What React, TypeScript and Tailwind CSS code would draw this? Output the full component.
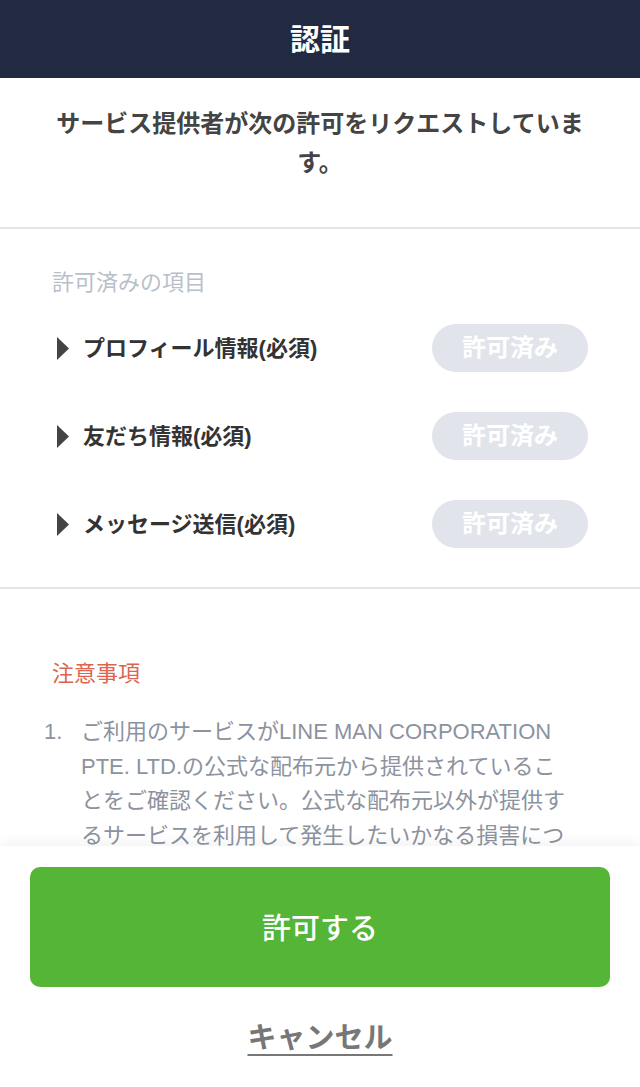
const items = ["プロフィール情報(必須)", "友だち情報(必須)", "メッセージ送信(必須)"];

export default function App() {
  return (
    <div
      className="flex h-[1087px] w-[640px] flex-col overflow-hidden bg-white"
      style={{ fontFamily: '"Liberation Sans", "Noto Sans CJK JP", sans-serif' }}
    >
      <header className="flex h-[78px] shrink-0 items-center justify-center bg-[#222a42]">
        <h1 className="text-[30px] font-bold text-white">認証</h1>
      </header>

      <div className="relative min-h-0 flex-1">
        <section className="border-b-2 border-[#e5e5e5] px-[50px] pt-[26px] pb-[45px]">
          <p className="text-center text-[24px] font-bold leading-[39px] text-[#444]">
            サービス提供者が次の許可をリクエストしています。
          </p>
        </section>

        <section className="border-b-2 border-[#e5e5e5] px-[52px] pt-[39px] pb-[19px]">
          <h2 className="text-[22px] leading-[30px] text-[#b9bfc8]">許可済みの項目</h2>
          <ul className="mt-[6px]">
            {items.map((item) => (
              <li key={item} className="flex h-[88px] items-center justify-between">
                <div className="flex items-center gap-[14px] pl-[5px]">
                  <svg width="12" height="23" viewBox="0 0 12 23">
                    <path d="M0 0 L12 11.5 L0 23 Z" fill="#444" />
                  </svg>
                  <span className="text-[22px] font-bold text-[#333]">{item}</span>
                </div>
                <span className="flex h-[48px] w-[156px] items-center justify-center rounded-full bg-[#e1e5eb] text-[24px] font-bold text-white">
                  許可済み
                </span>
              </li>
            ))}
          </ul>
        </section>

        <section className="px-[52px] pt-[70px]">
          <h2 className="text-[22px] leading-[30px] text-[#dc6550]">注意事項</h2>
          <ol className="mt-[26px] -ml-[8px] text-[22px] leading-[34.5px] text-[#8c929e]">
            <li className="flex gap-[13px]">
              <span className="w-[24px] shrink-0">1.</span>
              <span className="whitespace-nowrap">
                ご利用のサービスがLINE MAN CORPORATION
                <br />
                PTE. LTD.の公式な配布元から提供されているこ
                <br />
                とをご確認ください。公式な配布元以外が提供す
                <br />
                るサービスを利用して発生したいかなる損害につ
              </span>
            </li>
          </ol>
        </section>
      </div>

      <footer className="relative z-10 flex h-[241px] shrink-0 flex-col items-center bg-white px-[30px] pt-[21px] shadow-[0_-6px_10px_rgba(0,0,0,0.04)]">
        <button className="flex h-[120px] w-full items-center justify-center rounded-[10px] bg-[#55b536] pt-[5px] text-[29px] font-medium text-white">
          許可する
        </button>
        <button className="mt-[30px] text-[29px] font-bold text-[#777] underline underline-offset-[6px]">
          キャンセル
        </button>
      </footer>
    </div>
  );
}
